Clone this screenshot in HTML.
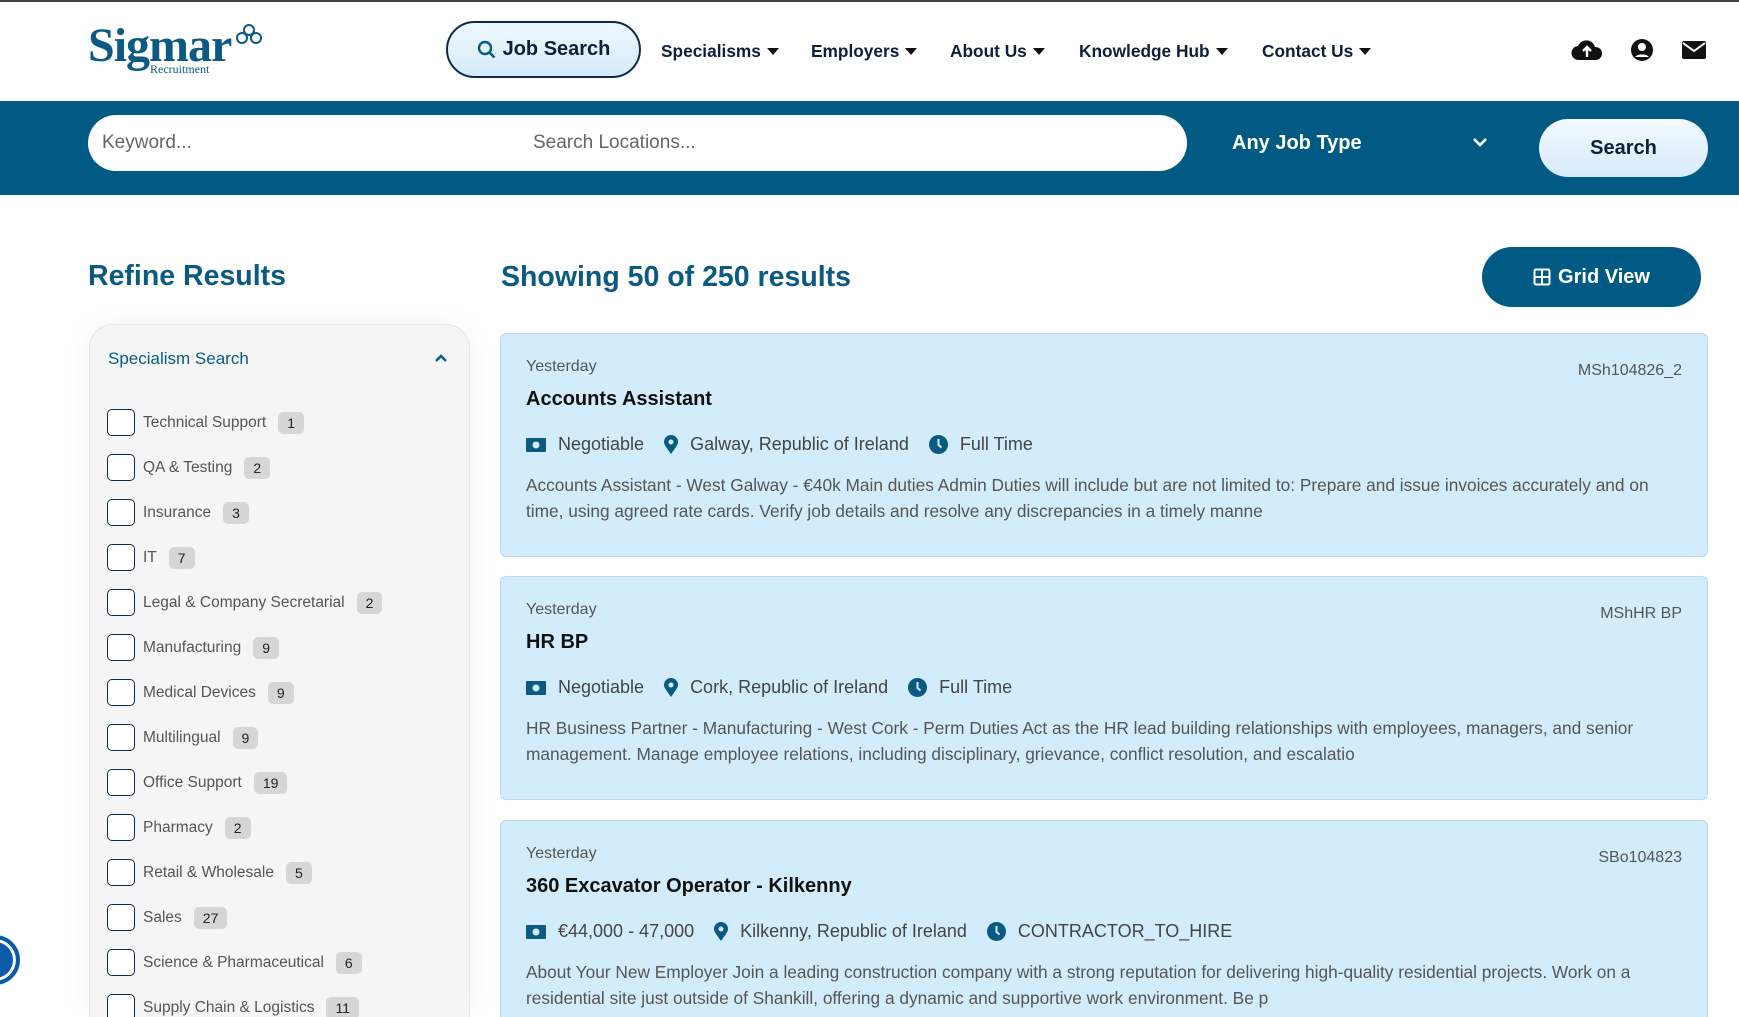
<!DOCTYPE html>
<html><head><meta charset="utf-8">
<style>
*{box-sizing:border-box;margin:0;padding:0}
html{height:1017px;overflow:hidden}
body{width:1739px;height:1017px;overflow:hidden;background:#fff;font-family:"Liberation Sans",sans-serif;position:relative}
.abs{position:absolute}
.topbar{left:0;top:0;width:1739px;height:2px;background:#444}
.logo{left:88px;top:18px;font-family:"Liberation Serif",serif;font-weight:bold;font-size:48px;color:#0a5a82;letter-spacing:-1px}
.logo small{position:absolute;left:62px;top:44px;font-size:12px;letter-spacing:0;font-weight:normal;color:#0a5a82}
.jsbtn{left:446px;top:21px;width:195px;height:57px;border:2px solid #0d2a4a;border-radius:29px;background:linear-gradient(#eef7fd,#d6ecfb);font-weight:bold;font-size:20px;color:#0d1f3a;display:flex;align-items:center;justify-content:center;gap:6px}
.nav{top:41px;font-weight:bold;font-size:17.3px;color:#0d1f3a}
.nav:after{content:"";display:inline-block;margin-left:6px;border-left:6px solid transparent;border-right:6px solid transparent;border-top:7px solid #111;vertical-align:2px}
.band{left:0;top:101px;width:1739px;height:94px;background:#005a83}
.inp{left:88px;top:115px;width:1099px;height:56px;background:#fff;border-radius:28px}
.ph{top:132px;font-size:19px;color:#666}
.ajt{left:1232px;top:132px;color:#fff;font-weight:bold;font-size:20px}
.srch{left:1539px;top:119px;width:169px;height:58px;border-radius:29px;background:linear-gradient(#f3f9fe,#d6ebfa);font-weight:bold;font-size:20px;color:#0d1f3a;display:flex;align-items:center;justify-content:center}
.h2{font-size:28.5px;color:#0a5a82;font-weight:bold}
.grid{left:1482px;top:247px;width:219px;height:60px;border-radius:30px;background:#005a83;color:#fff;font-weight:bold;font-size:20px;display:flex;align-items:center;justify-content:center;gap:7px}
.side{left:89px;top:324px;width:381px;height:693px;background:#f5f5f5;border:1px solid #e6e6e6;border-bottom:none;border-radius:24px 24px 0 0;box-shadow:0 0 30px rgba(0,0,0,.05);overflow:hidden}
.row{position:absolute;left:17px;display:flex;align-items:center;font-size:15.5px;color:#555}
.cb{width:28px;height:27px;border:1.5px solid #0d2a4a;border-radius:5px;background:#fff;margin-right:8px}
.bd{margin-left:12px;background:#d6d6d6;border-radius:5px;padding:3px 9px;font-size:14px;color:#222}
.card{left:500px;width:1208px;height:224px;background:#d3ecfc;border:1px solid #b9d9ee;border-radius:6px}
.card .d{position:absolute;left:25px;top:24px;font-size:16px;color:#555}
.card .id{position:absolute;right:25px;top:28px;font-size:16px;color:#555}
.card .t{position:absolute;left:25px;top:54px;font-size:20px;font-weight:bold;color:#111}
.card .m{position:absolute;left:25px;top:100px;font-size:18px;color:#444;display:flex;align-items:center}
.card .m svg{margin-right:12px}
.card .m span{margin-right:20px}
.card .x{position:absolute;left:25px;right:25px;top:138px;font-size:17.3px;color:#555;line-height:26px}
</style></head><body>
<div class="abs topbar"></div>
<div class="abs logo">Sigmar<small>Recruitment</small><svg style="position:absolute;left:146px;top:6px" width="30" height="22" viewBox="0 0 30 22"><g fill="none" stroke="#0a5a82" stroke-width="2"><circle cx="8" cy="14" r="5"/><circle cx="22" cy="14" r="5"/><circle cx="15" cy="6" r="5"/></g></svg></div>
<div class="abs jsbtn"><svg width="20" height="20" viewBox="0 0 20 20"><circle cx="8" cy="8" r="6" fill="none" stroke="#0a5a82" stroke-width="2.4"/><path d="M12.5 12.5l5 5" stroke="#0a5a82" stroke-width="2.6"/></svg>Job Search</div>
<div class="abs nav" style="left:661px">Specialisms</div>
<div class="abs nav" style="left:811px">Employers</div>
<div class="abs nav" style="left:950px">About Us</div>
<div class="abs nav" style="left:1079px">Knowledge Hub</div>
<div class="abs nav" style="left:1262px">Contact Us</div>
<svg class="abs" style="left:1571px;top:38px" width="32" height="24" viewBox="0 0 32 24"><path d="M8 22a7 7 0 0 1-1-14 9 9 0 0 1 17 1 6.5 6.5 0 0 1 1 13z" fill="#111"/><path d="M16 19v-9M12 13l4-4 4 4" stroke="#fff" stroke-width="2.4" fill="none"/></svg>
<svg class="abs" style="left:1630px;top:38px" width="24" height="24" viewBox="0 0 24 24"><circle cx="12" cy="12" r="11" fill="#111"/><circle cx="12" cy="9" r="4" fill="#fff"/><path d="M5 19a8 5 0 0 1 14 0" fill="#fff"/></svg>
<svg class="abs" style="left:1682px;top:41px" width="24" height="18" viewBox="0 0 24 18"><rect width="24" height="18" rx="2" fill="#111"/><path d="M1 2l11 8 11-8" stroke="#fff" stroke-width="2" fill="none"/></svg>
<div class="abs band"></div>
<div class="abs inp"></div>
<div class="abs ph" style="left:102px">Keyword...</div>
<div class="abs ph" style="left:533px">Search Locations...</div>
<div class="abs ajt">Any Job Type</div>
<svg class="abs" style="left:1472px;top:137px" width="16" height="11" viewBox="0 0 16 11"><path d="M2 2l6 6 6-6" stroke="#fff" stroke-width="2.6" fill="none"/></svg>
<div class="abs srch">Search</div>
<div class="abs h2" style="left:88px;top:260px">Refine Results</div>
<div class="abs h2" style="left:501px;top:261px">Showing 50 of 250 results</div>
<div class="abs grid"><svg width="18" height="18" viewBox="0 0 18 18"><rect x="1.5" y="1.5" width="15" height="15" rx="1.5" fill="none" stroke="#fff" stroke-width="2"/><path d="M9 1.5v15M1.5 9h15" stroke="#fff" stroke-width="2"/></svg>Grid View</div>
<div class="abs side">
<div style="position:absolute;left:18px;top:24px;font-size:17px;color:#0a5a82">Specialism Search</div>
<svg style="position:absolute;left:344px;top:28px" width="14" height="10" viewBox="0 0 14 10"><path d="M2 8l5-5 5 5" stroke="#0a5a82" stroke-width="2.4" fill="none"/></svg>
<div class="row" style="top:84px"><div class="cb"></div>Technical Support<span class="bd">1</span></div>
<div class="row" style="top:129px"><div class="cb"></div>QA &amp; Testing<span class="bd">2</span></div>
<div class="row" style="top:174px"><div class="cb"></div>Insurance<span class="bd">3</span></div>
<div class="row" style="top:219px"><div class="cb"></div>IT<span class="bd">7</span></div>
<div class="row" style="top:264px"><div class="cb"></div>Legal &amp; Company Secretarial<span class="bd">2</span></div>
<div class="row" style="top:309px"><div class="cb"></div>Manufacturing<span class="bd">9</span></div>
<div class="row" style="top:354px"><div class="cb"></div>Medical Devices<span class="bd">9</span></div>
<div class="row" style="top:399px"><div class="cb"></div>Multilingual<span class="bd">9</span></div>
<div class="row" style="top:444px"><div class="cb"></div>Office Support<span class="bd">19</span></div>
<div class="row" style="top:489px"><div class="cb"></div>Pharmacy<span class="bd">2</span></div>
<div class="row" style="top:534px"><div class="cb"></div>Retail &amp; Wholesale<span class="bd">5</span></div>
<div class="row" style="top:579px"><div class="cb"></div>Sales<span class="bd">27</span></div>
<div class="row" style="top:624px"><div class="cb"></div>Science &amp; Pharmaceutical<span class="bd">6</span></div>
<div class="row" style="top:669px"><div class="cb"></div>Supply Chain &amp; Logistics<span class="bd">11</span></div>
</div>
<div class="abs" style="left:-30px;top:935px;width:50px;height:50px;border-radius:50%;background:#0a5aa8;border:4px solid #0a5aa8;box-shadow:inset 0 0 0 3px #fff"></div>

<div class="abs card" style="top:333px">
<div class="d">Yesterday</div><div class="id">MSh104826_2</div>
<div class="t">Accounts Assistant</div>
<div class="m"><svg width="20" height="14" viewBox="0 0 20 14"><rect width="20" height="14" rx="1" fill="#0a5a82"/><circle cx="10" cy="7" r="3.5" fill="#d3ecfc"/></svg><span>Negotiable</span><svg width="14" height="19" viewBox="0 0 14 19"><path d="M7 19C2 12 0 9.5 0 7a7 7 0 0 1 14 0c0 2.5-2 5-7 12z" fill="#0a5a82"/><circle cx="7" cy="7" r="2.5" fill="#d3ecfc"/></svg><span>Galway, Republic of Ireland</span><svg width="19" height="19" viewBox="0 0 19 19"><circle cx="9.5" cy="9.5" r="9.5" fill="#0a5a82"/><path d="M9.5 4v6l3 2.5" stroke="#d3ecfc" stroke-width="2" fill="none"/></svg><span>Full Time</span></div>
<div class="x">Accounts Assistant - West Galway - €40k Main duties Admin Duties will include but are not limited to: Prepare and issue invoices accurately and on time, using agreed rate cards. Verify job details and resolve any discrepancies in a timely manne</div>
</div>
<div class="abs card" style="top:576px">
<div class="d">Yesterday</div><div class="id">MShHR BP</div>
<div class="t">HR BP</div>
<div class="m"><svg width="20" height="14" viewBox="0 0 20 14"><rect width="20" height="14" rx="1" fill="#0a5a82"/><circle cx="10" cy="7" r="3.5" fill="#d3ecfc"/></svg><span>Negotiable</span><svg width="14" height="19" viewBox="0 0 14 19"><path d="M7 19C2 12 0 9.5 0 7a7 7 0 0 1 14 0c0 2.5-2 5-7 12z" fill="#0a5a82"/><circle cx="7" cy="7" r="2.5" fill="#d3ecfc"/></svg><span>Cork, Republic of Ireland</span><svg width="19" height="19" viewBox="0 0 19 19"><circle cx="9.5" cy="9.5" r="9.5" fill="#0a5a82"/><path d="M9.5 4v6l3 2.5" stroke="#d3ecfc" stroke-width="2" fill="none"/></svg><span>Full Time</span></div>
<div class="x">HR Business Partner - Manufacturing - West Cork - Perm Duties Act as the HR lead building relationships with employees, managers, and senior management. Manage employee relations, including disciplinary, grievance, conflict resolution, and escalatio</div>
</div>
<div class="abs card" style="top:820px;height:197px;border-bottom:none;border-radius:6px 6px 0 0;overflow:hidden">
<div class="d">Yesterday</div><div class="id">SBo104823</div>
<div class="t">360 Excavator Operator - Kilkenny</div>
<div class="m"><svg width="20" height="14" viewBox="0 0 20 14"><rect width="20" height="14" rx="1" fill="#0a5a82"/><circle cx="10" cy="7" r="3.5" fill="#d3ecfc"/></svg><span>€44,000 - 47,000</span><svg width="14" height="19" viewBox="0 0 14 19"><path d="M7 19C2 12 0 9.5 0 7a7 7 0 0 1 14 0c0 2.5-2 5-7 12z" fill="#0a5a82"/><circle cx="7" cy="7" r="2.5" fill="#d3ecfc"/></svg><span>Kilkenny, Republic of Ireland</span><svg width="19" height="19" viewBox="0 0 19 19"><circle cx="9.5" cy="9.5" r="9.5" fill="#0a5a82"/><path d="M9.5 4v6l3 2.5" stroke="#d3ecfc" stroke-width="2" fill="none"/></svg><span>CONTRACTOR_TO_HIRE</span></div>
<div class="x">About Your New Employer Join a leading construction company with a strong reputation for delivering high-quality residential projects. Work on a residential site just outside of Shankill, offering a dynamic and supportive work environment. Be p</div>
</div>
</body></html>
